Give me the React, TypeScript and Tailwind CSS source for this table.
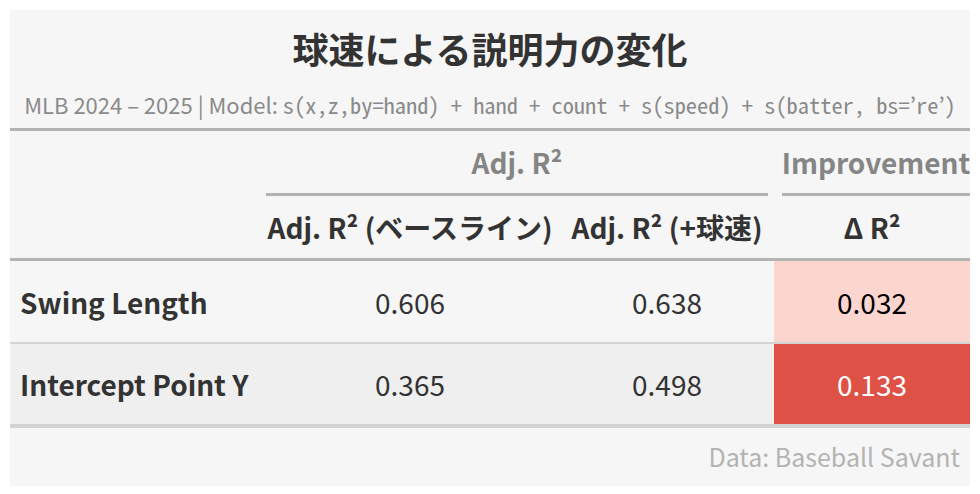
import React from "react";

const sans = { fontFamily: '"Noto Sans CJK JP", "Noto Sans", sans-serif' };
const mono = { fontFamily: '"Noto Sans Mono CJK JP", "Noto Sans CJK JP", "DejaVu Sans Mono", monospace' };

export default function App() {
  return (
    <div className="w-[980px] h-[494px] bg-white p-[10px] pb-[8px]" style={sans}>
      <div className="w-[960px] h-[476px] bg-[#f6f6f6] flex flex-col">
        <div className="h-[118px] flex flex-col items-center">
          <div className="mt-[16px] text-[36px] leading-[44px] font-bold text-[#333333]">球速による説明力の変化</div>
          <div className="mt-[20px] text-[22px] leading-[28px] text-[#8a8a8a] whitespace-nowrap">
            MLB 2024 – 2025 | Model: <span className="text-[22.4px]" style={mono}>s(x,z,by=hand) + hand + count + s(speed) + s(batter, bs=’re’)</span>
          </div>
        </div>
        <div className="h-[3px] bg-[#b3b3b3]" />
        {/* header row 1 */}
        <div className="grid grid-cols-[250px_300px_214px_196px] h-[65px]">
          <div />
          <div className="col-span-2 flex flex-col justify-end px-[6px]">
            <div className="flex-1 flex items-center justify-center text-[28px] font-bold text-[#858585]">
              Adj. R²
            </div>
            <div className="h-[3px] bg-[#b3b3b3]" />
          </div>
          <div className="flex flex-col pl-[8px]">
            <div className="flex-1 flex items-center justify-center text-[28px] font-bold text-[#858585] whitespace-nowrap">
              Improvement
            </div>
            <div className="h-[3px] bg-[#b3b3b3]" />
          </div>
        </div>
        {/* header row 2 */}
        <div className="grid grid-cols-[250px_300px_214px_196px] h-[62px] items-center text-[28px] font-bold text-[#333333]">
          <div />
          <div className="text-center whitespace-nowrap">Adj. R² (ベースライン)</div>
          <div className="text-center whitespace-nowrap">Adj. R² (+球速)</div>
          <div className="text-center">Δ R²</div>
        </div>
        <div className="h-[3px] bg-[#b3b3b3]" />
        {/* row 1 */}
        <div className="grid grid-cols-[250px_300px_214px_196px] h-[81px] items-stretch text-[28px] text-[#333333]">
          <div className="flex items-center pl-[10px] font-bold whitespace-nowrap">Swing Length</div>
          <div className="flex items-center justify-center">0.606</div>
          <div className="flex items-center justify-center">0.638</div>
          <div className="flex items-center justify-center bg-[#fdd5cf] text-black">0.032</div>
        </div>
        <div className="h-[2px] bg-[#d3d3d3]" />
        {/* row 2 */}
        <div className="grid grid-cols-[250px_300px_214px_196px] h-[80px] items-stretch text-[28px] text-[#333333] bg-[#efefef]">
          <div className="flex items-center pl-[10px] font-bold whitespace-nowrap">Intercept Point Y</div>
          <div className="flex items-center justify-center">0.365</div>
          <div className="flex items-center justify-center">0.498</div>
          <div className="flex items-center justify-center bg-[#de5147] text-white">0.133</div>
        </div>
        <div className="h-[4px] bg-[#d3d3d3]" />
        <div className="flex-1 flex items-center justify-end pr-[10px] text-[25px] text-[#b3b3b3]">
          Data: Baseball Savant
        </div>
      </div>
    </div>
  );
}
